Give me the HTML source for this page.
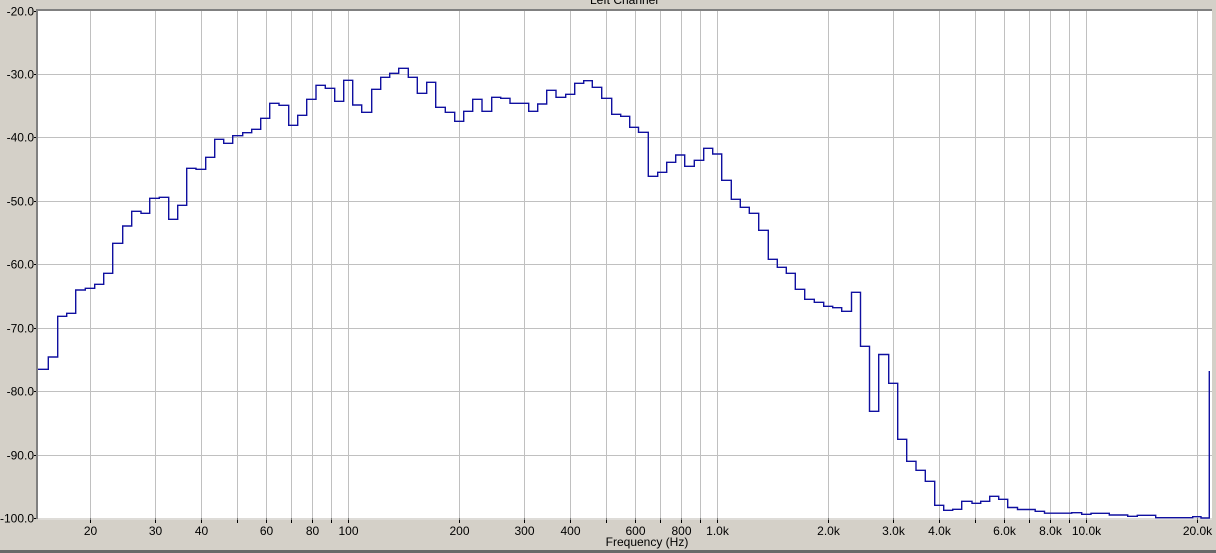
<!DOCTYPE html>
<html><head><meta charset="utf-8"><style>
html,body{margin:0;padding:0;background:#d4d0c8;width:1216px;height:553px;overflow:hidden}
svg{display:block}
text{font-family:"Liberation Sans",Arial,sans-serif;font-size:12px;fill:#000}
</style></head><body>
<svg width="1216" height="553" viewBox="0 0 1216 553" xmlns="http://www.w3.org/2000/svg">
<rect x="0" y="0" width="1216" height="553" fill="#d4d0c8"/>
<text x="624" y="4" text-anchor="middle">Left Channel</text>
<rect x="38" y="11" width="1174" height="507" fill="#fff"/>
<g stroke="#c0c0c0" stroke-width="1">
<line x1="38" x2="1212" y1="74.5" y2="74.5"/>
<line x1="38" x2="1212" y1="137.5" y2="137.5"/>
<line x1="38" x2="1212" y1="201.5" y2="201.5"/>
<line x1="38" x2="1212" y1="264.5" y2="264.5"/>
<line x1="38" x2="1212" y1="328.5" y2="328.5"/>
<line x1="38" x2="1212" y1="391.5" y2="391.5"/>
<line x1="38" x2="1212" y1="455.5" y2="455.5"/>
<g id="v">
<line x1="90.5" x2="90.5" y1="11" y2="518"/>
<line x1="155.5" x2="155.5" y1="11" y2="518"/>
<line x1="201.5" x2="201.5" y1="11" y2="518"/>
<line x1="237.5" x2="237.5" y1="11" y2="518"/>
<line x1="266.5" x2="266.5" y1="11" y2="518"/>
<line x1="291.5" x2="291.5" y1="11" y2="518"/>
<line x1="312.5" x2="312.5" y1="11" y2="518"/>
<line x1="331.5" x2="331.5" y1="11" y2="518"/>
<line x1="348.5" x2="348.5" y1="11" y2="518"/>
<line x1="459.5" x2="459.5" y1="11" y2="518"/>
<line x1="524.5" x2="524.5" y1="11" y2="518"/>
<line x1="570.5" x2="570.5" y1="11" y2="518"/>
<line x1="606.5" x2="606.5" y1="11" y2="518"/>
<line x1="635.5" x2="635.5" y1="11" y2="518"/>
<line x1="660.5" x2="660.5" y1="11" y2="518"/>
<line x1="681.5" x2="681.5" y1="11" y2="518"/>
<line x1="700.5" x2="700.5" y1="11" y2="518"/>
<line x1="717.5" x2="717.5" y1="11" y2="518"/>
<line x1="828.5" x2="828.5" y1="11" y2="518"/>
<line x1="893.5" x2="893.5" y1="11" y2="518"/>
<line x1="939.5" x2="939.5" y1="11" y2="518"/>
<line x1="975.5" x2="975.5" y1="11" y2="518"/>
<line x1="1004.5" x2="1004.5" y1="11" y2="518"/>
<line x1="1029.5" x2="1029.5" y1="11" y2="518"/>
<line x1="1050.5" x2="1050.5" y1="11" y2="518"/>
<line x1="1069.5" x2="1069.5" y1="11" y2="518"/>
<line x1="1086.5" x2="1086.5" y1="11" y2="518"/>
<line x1="1197.5" x2="1197.5" y1="11" y2="518"/>
</g>
</g>
<!-- bottom ticks -->
<g stroke="#000" stroke-width="1">
<path d="M90.5 518v5M155.5 518v5M201.5 518v5M237.5 518v5M266.5 518v5M291.5 518v5M312.5 518v5M331.5 518v5M348.5 518v5M459.5 518v5M524.5 518v5M570.5 518v5M606.5 518v5M635.5 518v5M660.5 518v5M681.5 518v5M700.5 518v5M717.5 518v5M828.5 518v5M893.5 518v5M939.5 518v5M975.5 518v5M1004.5 518v5M1029.5 518v5M1050.5 518v5M1069.5 518v5M1086.5 518v5M1197.5 518v5"/>
<path d="M34 11.5h4M34 74.5h4M34 137.5h4M34 201.5h4M34 264.5h4M34 328.5h4M34 391.5h4M34 455.5h4M34 518.5h4"/>
</g>
<g stroke="#e8e8e8"><line x1="38" x2="1212" y1="519" y2="519"/></g>
<rect x="36" y="9" width="2" height="510" fill="#808080"/>
<rect x="36" y="9" width="1176" height="2" fill="#808080"/>
<path fill="none" stroke="#1010a0" stroke-width="1.4" d="M38 369.3H48.3V357H57.7V316.3H66.7V313.3H75.7V290H85.3V288.3H94.7V284.3H103.7V273.3H112.7V243.3H122.7V226H131.7V211.3H141V213.3H149.7V198.3H159.3V197.3H168.7V219.3H177.7V205.3H186.7V168.3H196V169.3H205.7V157.3H214.7V139.3H223.7V143.3H232.7V135.7H242.7V132.7H251.7V129.3H260.7V118.3H269.7V103.3H279V105.3H288.7V125.3H297.7V115.3H306.7V99.3H316V85.3H325.3V88.3H334.7V101.3H343.7V80.3H352.7V105H361.7V112.3H371.7V89.3H380.7V77.3H389.7V73.3H398.7V68.3H408.3V77.3H417.3V93.3H426.7V82.3H435.7V107.3H445.3V112.3H454.7V121.3H463.7V111.3H472.7V99.3H482V111.3H491.7V97.3H500.7V98.3H510V103.3H528.7V111.3H537.7V104H546.7V90.3H556V97.3H565.7V94.3H574.7V83.3H583.7V80.7H592.3V87.3H601.7V98.3H611.7V114.3H620.7V116.3H629.7V127.3H638.5V132.3H648.3V176.3H657.7V172.3H666.7V162.3H675.7V155H684.7V166.3H694.3V160.3H703.7V148.3H712.7V154H721.7V180.3H731.3V199.3H740.3V207.3H749.3V213.3H758.7V230.3H768.3V259.3H777.3V267.3H786.3V273.3H795.3V289.3H804.7V299.3H814.3V302.3H823.7V306.3H832.7V307.7H841.7V311.3H851.5V292.3H860.5V346.3H869.5V411.3H878.7V354.5H888.7V383.3H897.7V439.3H906.7V461.3H916V470.3H925.3V481.3H934.7V505.3H943.7V510.3H952.7V509.3H961.7V501.3H972V503.3H980.7V501.3H989.7V496.3H998.7V499.3H1007.7V507.5H1017.5V509.5H1035.2V511.3H1044.5V513.2H1071.7V512.7H1081.7V514.3H1091V513.3H1109.3V515H1127.7V516.3H1137.3V515.3H1155.7V517.7H1192.7V516.7H1201V518H1209.3V371"/>
<g text-anchor="end">
<text x="34" y="15.5">-20.0</text>
<text x="34" y="78.5">-30.0</text>
<text x="34" y="141.5">-40.0</text>
<text x="34" y="205.5">-50.0</text>
<text x="34" y="268.5">-60.0</text>
<text x="34" y="332.5">-70.0</text>
<text x="34" y="395.5">-80.0</text>
<text x="34" y="459.5">-90.0</text>
<text x="34" y="522.5">-100.0</text>
</g>
<g text-anchor="middle">
<text x="90.5" y="535">20</text>
<text x="155.5" y="535">30</text>
<text x="201.5" y="535">40</text>
<text x="266.5" y="535">60</text>
<text x="312.5" y="535">80</text>
<text x="348.5" y="535">100</text>
<text x="459.5" y="535">200</text>
<text x="524.5" y="535">300</text>
<text x="570.5" y="535">400</text>
<text x="635.5" y="535">600</text>
<text x="681.5" y="535">800</text>
<text x="717.5" y="535">1.0k</text>
<text x="828.5" y="535">2.0k</text>
<text x="893.5" y="535">3.0k</text>
<text x="939.5" y="535">4.0k</text>
<text x="1004.5" y="535">6.0k</text>
<text x="1050.5" y="535">8.0k</text>
<text x="1086.5" y="535">10.0k</text>
<text x="1197.5" y="535">20.0k</text>
<text x="647" y="546">Frequency (Hz)</text>
</g>
<rect x="0" y="550" width="1216" height="3" fill="#6a6a6a"/>
</svg>
</body></html>
